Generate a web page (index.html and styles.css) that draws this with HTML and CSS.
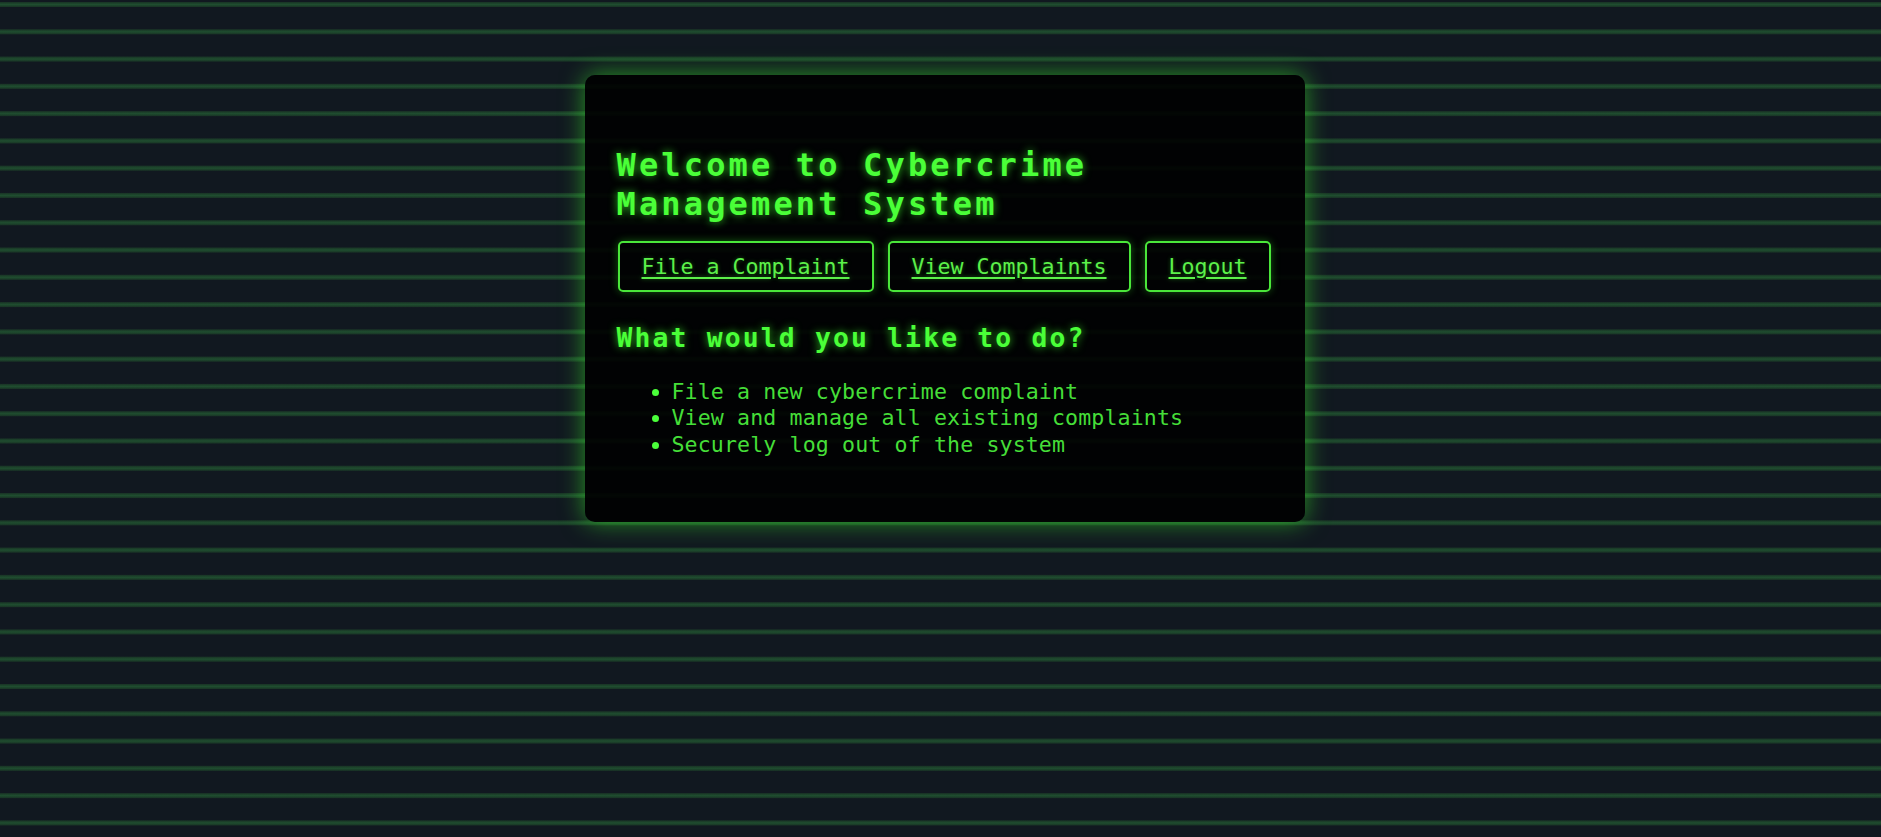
FILE: index.html
```html
<!DOCTYPE html>
<html lang="en">
<head>
<meta charset="utf-8">
<title>Cybercrime Management System</title>
<link rel="stylesheet" href="styles.css">
</head>
<body>
  <main class="card">
    <h1 class="title">Welcome to Cybercrime Management System</h1>
    <nav class="actions">
      <a class="btn" href="#">File a Complaint</a>
      <a class="btn" href="#">View Complaints</a>
      <a class="btn" href="#">Logout</a>
    </nav>
    <h3 class="subtitle">What would you like to do?</h3>
    <ul class="options">
      <li>File a new cybercrime complaint</li>
      <li>View and manage all existing complaints</li>
      <li>Securely log out of the system</li>
    </ul>
  </main>
</body>
</html>
```

FILE: styles.css
```css
html, body {
  height: 100%;
}
body {
  margin: 0;
  padding: 75px 0 0 8px;
  box-sizing: border-box;
  display: flex;
  justify-content: center;
  align-items: flex-start;
  font-family: "DejaVu Sans Mono", monospace;
  background-color: #111820;
  background-image: repeating-linear-gradient(
    to bottom,
    #111820 0px,
    #111820 1.5px,
    #1a3827 2.5px,
    #1f4d2f 4.5px,
    #1a3827 6.5px,
    #111820 7.5px,
    #111820 27.28px
  );
}
.card {
  width: 720px;
  height: 447px;
  box-sizing: border-box;
  padding: 71px 32px 0 32px;
  background: rgba(0, 0, 0, 0.9);
  border-radius: 10px;
  box-shadow: 0 0 24px rgba(60, 255, 40, 0.55);
}
.title {
  margin: 0;
  font-size: 32px;
  line-height: 39px;
  font-weight: bold;
  letter-spacing: 3.15px;
  color: #4aff38;
  text-shadow: 0 0 8px rgba(60, 255, 40, 0.75);
}
.actions {
  display: flex;
  gap: 14px;
  margin-top: 17px;
  margin-left: 1px;
}
.btn {
  display: block;
  padding: 11px 22px;
  border: 2px solid #4ae63a;
  border-radius: 5px;
  font-size: 21.6px;
  line-height: 25px;
  color: #5cf04a;
  text-decoration: underline;
  text-underline-offset: 3px;
  box-shadow: 0 0 8px rgba(60, 255, 40, 0.35);
  text-shadow: 0 0 4px rgba(60, 255, 40, 0.35);
}
.subtitle {
  margin: 30px 0 0 0;
  font-size: 26.4px;
  line-height: 31px;
  font-weight: bold;
  letter-spacing: 2.15px;
  color: #4aff38;
  text-shadow: 0 0 8px rgba(60, 255, 40, 0.75);
}
.options {
  margin: 26px 0 0 0;
  padding-left: 55px;
  font-size: 21.6px;
  letter-spacing: 0.12px;
  line-height: 26.4px;
  color: #45de38;
}
.options li::marker {
  color: #4aff3a;
}
```
